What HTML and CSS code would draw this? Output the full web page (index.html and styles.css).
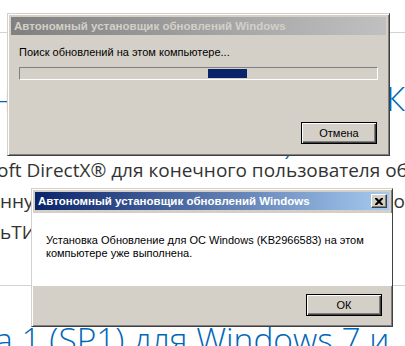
FILE: index.html
```html
<!DOCTYPE html>
<html lang="ru">
<head>
  <meta charset="UTF-8" />
  <title>Автономный установщик обновлений Windows</title>
  <link rel="stylesheet" href="styles.css">
</head>
<body>

  <!-- Page behind the dialogs -->
  <div class="page">
    <hr class="rule rule-top" />

    <h1 class="heading">
      <span class="line split"><span class="cut-left">ан</span><span>К</span></span>
      <span class="line second">ого пользователя)</span>
    </h1>

    <p class="lead">
      <span class="line">oft DirectX® для конечного пользователя обновление</span>
      <span class="line split"><span>нну</span><span>о</span></span>
      <span class="line">ьТИ М</span>
    </p>

    <hr class="rule" />

    <h2 class="heading heading-bottom">а 1 (SP1) для Windows 7 и</h2>
  </div>

  <!-- Inactive window: search in progress -->
  <div class="dialog dialog-search">
    <div class="titlebar inactive">
      <span class="title">Автономный установщик обновлений Windows</span>
    </div>
    <div class="dialog-body">
      <div class="status">Поиск обновлений на этом компьютере...</div>
      <div class="progress">
        <div class="chunk"></div>
      </div>
    </div>
    <div class="dialog-footer">
      <button class="btn default">Отмена</button>
    </div>
  </div>

  <!-- Active window: already installed -->
  <div class="dialog dialog-done">
    <div class="titlebar">
      <span class="title">Автономный установщик обновлений Windows</span>
      <button class="close" aria-label="Закрыть">
        <svg width="8" height="7" viewBox="0 0 8 7">
          <path d="M0 0h2l2 2 2-2h2v1l-2.5 2.5L8 6v1H6L4 5 2 7H0V6l2.5-2.5L0 1z" fill="#000"/>
        </svg>
      </button>
    </div>
    <div class="message">
      Установка Обновление для ОС Windows (KB2966583) на этом компьютере уже выполнена.
    </div>
    <div class="dialog-footer">
      <button class="btn default">ОК</button>
    </div>
  </div>

</body>
</html>
```

FILE: styles.css
```css
/* Base */
* {
  margin: 0;
  padding: 0;
  box-sizing: border-box;
}

body {
  background: #fff;
  width: 405px;
  height: 346px;
  overflow: hidden;
  position: relative;
  font-family: "Open Sans", "Liberation Sans", sans-serif;
}

/* Page behind */
.page {
  padding-top: 32px;
  height: 346px;
  overflow: hidden;
}

.rule {
  border: none;
  border-top: 1px solid #d2d2d2;
}

.heading {
  color: #0067b8;
  font-weight: 300;
  font-size: 33px;
  line-height: 46px;
  margin-top: 43px;
}

.line {
  display: block;
  white-space: nowrap;
  overflow: hidden;
}

.split {
  display: flex;
  justify-content: space-between;
}

.cut-left {
  margin-left: -26px;
}

.heading .second {
  margin-top: -3px;
  padding-left: 8px;
  width: 320px;
}

.lead {
  color: #333;
  font-size: 19px;
  line-height: 31px;
  margin-top: -10px;
  margin-bottom: 37px;
}

.lead .line:first-child {
  text-indent: -3px;
}

.heading-bottom {
  display: block;
  font-size: 33.5px;
  margin-top: 30px;
  text-indent: -5px;
  white-space: nowrap;
}

/* Windows 2000 dialogs */
.dialog {
  position: absolute;
  display: flex;
  flex-direction: column;
  background: #d4d0c8;
  border-top: 1px solid #d4d0c8;
  border-left: 1px solid #d4d0c8;
  border-right: 1px solid #404040;
  border-bottom: 1px solid #404040;
  box-shadow: inset 1px 1px #fff, inset -1px -1px #808080;
  padding: 3px;
  font-family: "Liberation Sans", Arial, sans-serif;
  font-size: 11px;
  color: #000;
}

.dialog-search {
  left: 7px;
  top: 13px;
  width: 383px;
  height: 143px;
}

.dialog-done {
  left: 31px;
  top: 188px;
  width: 362px;
  height: 139px;
}

.titlebar {
  height: 18px;
  display: flex;
  align-items: center;
  justify-content: space-between;
  padding: 0 2px 0 3px;
  background: linear-gradient(to right, #0a246a, #a6caf0);
  color: #fff;
}

.titlebar.inactive {
  background: linear-gradient(to right, #808080, #c0c0c0);
  color: #d4d0c8;
}

.title {
  font-weight: bold;
  font-size: 11.5px;
  white-space: nowrap;
}

.close {
  width: 16px;
  height: 14px;
  display: flex;
  align-items: center;
  justify-content: center;
  background: #d4d0c8;
  border: 1px solid;
  border-color: #fff #404040 #404040 #fff;
  box-shadow: inset -1px -1px #808080;
}

.dialog-body {
  flex: 1;
  padding: 11px 8px 0 8px;
}

.status {
  line-height: 13px;
}

.progress {
  margin-top: 8px;
  height: 13px;
  border: 1px solid;
  border-color: #808080 #fff #fff #808080;
  padding: 1px 0;
}

.chunk {
  margin-left: 188px;
  width: 39px;
  height: 9px;
  background: #0a246a;
}

.message {
  background: #fff;
  margin: 3px -3px 0 -3px;
  height: 73px;
  padding: 21px 8px 0 14px;
  line-height: 13px;
}

.dialog-footer {
  display: flex;
  justify-content: flex-end;
  padding: 0 9px 8px 0;
}

.dialog-done .dialog-footer {
  flex: 1;
  align-items: center;
  padding: 2px 7px 1px 0;
}

.btn {
  width: 76px;
  height: 22px;
  background: #d4d0c8;
  font-family: "Liberation Sans", Arial, sans-serif;
  font-size: 11px;
  color: #000;
  border: 1px solid #000;
  box-shadow: inset 1px 1px #fff, inset -1px -1px #404040, inset -2px -2px #808080;
}
```
